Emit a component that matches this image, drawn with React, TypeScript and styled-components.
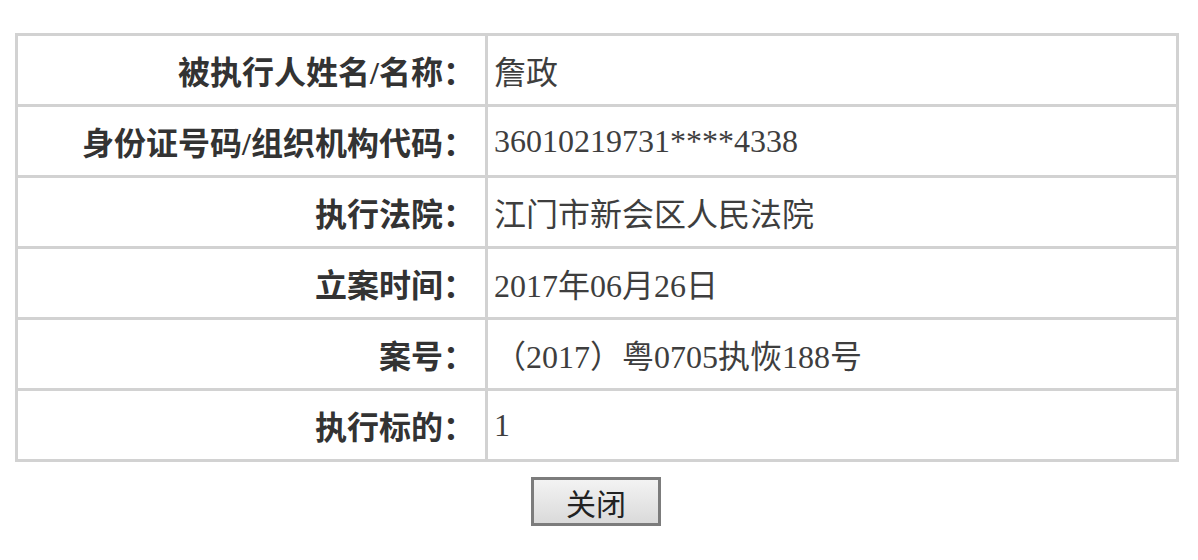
import React from "react";
import styled, { createGlobalStyle } from "styled-components";

const GlobalStyle = createGlobalStyle`
  html, body {
    margin: 0;
    padding: 0;
    background: #ffffff;
  }
  body {
    font-family: "Liberation Serif", "Noto Sans CJK SC", serif;
  }
`;

const Page = styled.div`
  display: flex;
  flex-direction: column;
  align-items: flex-start;
  padding: 33px 0 0 15px;
  width: 1164px;
`;

const Table = styled.table`
  width: 1164px;
  border-collapse: collapse;
  border: 3px solid #d2d2d2;
  table-layout: fixed;
`;

const Row = styled.tr`
  height: 71px;
`;

const LabelCell = styled.th`
  width: 457px;
  border: 3px solid #d2d2d2;
  padding: 0 10px 0 0;
  text-align: right;
  vertical-align: middle;
  font-family: "Liberation Serif", "Noto Sans CJK SC", serif;
  font-size: 32px;
  font-weight: bold;
  color: #333333;
  white-space: nowrap;
`;

const ValueCell = styled.td`
  border: 3px solid #d2d2d2;
  padding: 0 0 0 6px;
  text-align: left;
  vertical-align: middle;
  font-family: "Liberation Serif", "Noto Sans CJK SC", serif;
  font-size: 32px;
  font-weight: normal;
  color: #3e3e3e;
  white-space: nowrap;
`;

const ButtonBar = styled.div`
  width: 1164px;
  display: flex;
  justify-content: center;
  padding-top: 15px;
`;

const CloseButton = styled.button`
  width: 130px;
  height: 49px;
  box-sizing: border-box;
  border: 3px solid #7c7c7c;
  background: linear-gradient(#f3f3f3, #dadada);
  font-family: "Noto Sans CJK SC", sans-serif;
  font-size: 30px;
  line-height: 1;
  color: #222222;
  padding: 0;
  display: flex;
  align-items: center;
  justify-content: center;
  cursor: pointer;
  margin-left: -2px;
`;

const rows: [string, string][] = [
  ["被执行人姓名/名称：", "詹政"],
  ["身份证号码/组织机构代码：", "36010219731****4338"],
  ["执行法院：", "江门市新会区人民法院"],
  ["立案时间：", "2017年06月26日"],
  ["案号：", "（2017）粤0705执恢188号"],
  ["执行标的：", "1"],
];

export default function App() {
  return (
    <>
      <GlobalStyle />
      <Page>
        <Table>
          <tbody>
            {rows.map(([label, value]) => (
              <Row key={label}>
                <LabelCell>{label}</LabelCell>
                <ValueCell>{value}</ValueCell>
              </Row>
            ))}
          </tbody>
        </Table>
        <ButtonBar>
          <CloseButton type="button">关闭</CloseButton>
        </ButtonBar>
      </Page>
    </>
  );
}
